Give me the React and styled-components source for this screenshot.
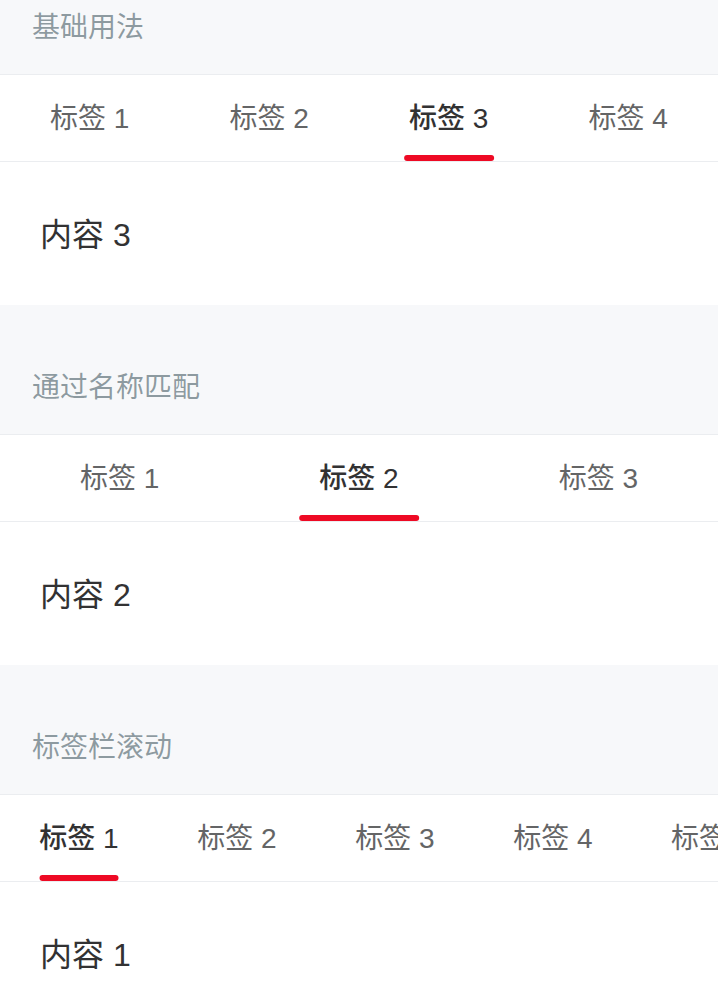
import { useState } from "react";
import styled, { createGlobalStyle } from "styled-components";

const Global = createGlobalStyle`
  html, body {
    margin: 0;
    padding: 0;
    background: #f7f8fa;
    overflow: hidden;
  }
  body {
    font-family: "Liberation Sans", "Noto Sans CJK SC", sans-serif;
    -webkit-font-smoothing: antialiased;
  }
`;

// page is shown scrolled down a little, so the first title is cut
const Page = styled.div`
  width: 718px;
  margin-top: -55px;
  background: #f7f8fa;
`;

const Title = styled.h2`
  margin: 0;
  padding: 67px 32px 30px;
  font-size: 28px;
  line-height: 32px;
  font-weight: 400;
  color: rgba(69, 90, 100, 0.6);
`;

const TabBar = styled.div`
  display: flex;
  height: 86px;
  background: #fff;
  border-top: 1px solid #ebedf0;
  border-bottom: 1px solid #ebedf0;
  overflow: hidden;
`;

const Tab = styled.div`
  position: relative;
  flex: ${(p) => (p.$basis ? `0 0 ${p.$basis}` : "1")};
  display: flex;
  align-items: center;
  justify-content: center;
  padding-bottom: 4px;
  box-sizing: border-box;
  white-space: nowrap;
  font-size: 28px;
  color: ${(p) => (p.$active ? "#323233" : "#646566")};
  font-weight: ${(p) => (p.$active ? 500 : 400)};
  cursor: pointer;
`;

const Line = styled.span`
  position: absolute;
  bottom: 0;
  left: 50%;
  width: 50%;
  height: 6px;
  border-radius: 6px;
  background: #ee0a24;
  transform: translateX(-50%);
`;

const Content = styled.div`
  padding: 52px 40px 48px;
  font-size: 32px;
  line-height: 43px;
  color: #323233;
  background: #fff;
`;

function Tabs({ titles, initial, basis }) {
  const [active, setActive] = useState(initial);
  return (
    <>
      <TabBar>
        {titles.map((t, i) => (
          <Tab
            key={t}
            $basis={basis}
            $active={i === active}
            onClick={() => setActive(i)}
          >
            {t}
            {i === active && <Line />}
          </Tab>
        ))}
      </TabBar>
      <Content>内容 {active + 1}</Content>
    </>
  );
}

const four = ["标签 1", "标签 2", "标签 3", "标签 4"];
const three = ["标签 1", "标签 2", "标签 3"];
const eight = ["标签 1", "标签 2", "标签 3", "标签 4", "标签 5", "标签 6", "标签 7", "标签 8"];

export default function App() {
  return (
    <Page>
      <Global />
      <section>
        <Title>基础用法</Title>
        <Tabs titles={four} initial={2} />
      </section>
      <section>
        <Title>通过名称匹配</Title>
        <Tabs titles={three} initial={1} />
      </section>
      <section>
        <Title>标签栏滚动</Title>
        <Tabs titles={eight} initial={0} basis="22%" />
      </section>
    </Page>
  );
}
